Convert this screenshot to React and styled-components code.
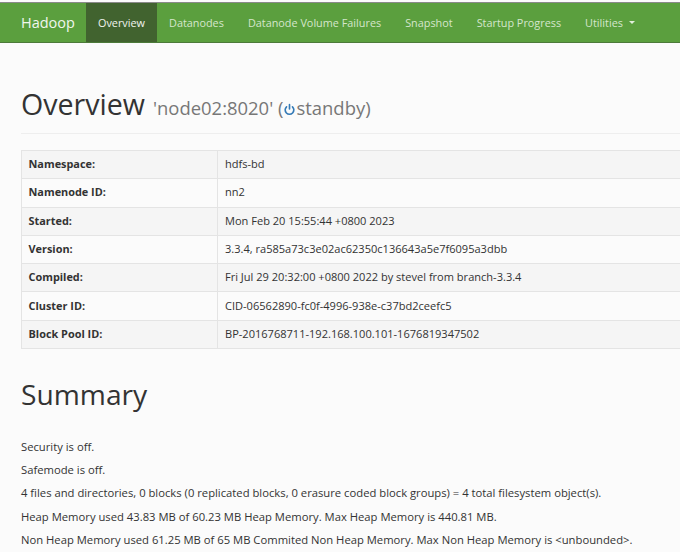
import React from "react";
import styled, { createGlobalStyle } from "styled-components";

const GlobalStyle = createGlobalStyle`
  html, body {
    margin: 0;
    padding: 0;
    height: 552px;
    overflow: hidden;
    background: #fbfbfb;
    font-family: "Open Sans", "Noto Sans", sans-serif;
    font-size: 12px;
    color: #333;
  }
`;

const Navbar = styled.nav`
  display: flex;
  align-items: stretch;
  height: 39px;
  margin-top: 2px;
  padding-left: 21px;
  background: #5b9f3e;
  border-top: 1px solid #8a8a8a;
  border-bottom: 1px solid #4c7a3a;
`;

const Brand = styled.a`
  display: flex;
  align-items: center;
  width: 65px;
  font-size: 14.5px;
  color: #f1f6ee;
`;

const NavItem = styled.a`
  display: flex;
  align-items: center;
  padding: 0 12px;
  font-size: 10.85px;
  color: ${(p) => (p.$active ? "#f0f4ee" : "#d5e6cc")};
  background: ${(p) => (p.$active ? "#41632f" : "transparent")};
`;

const Caret = styled.span`
  display: inline-block;
  width: 0;
  height: 0;
  margin-left: 6px;
  border-top: 3.5px solid #e3eedd;
  border-left: 3.5px solid transparent;
  border-right: 3.5px solid transparent;
`;

const Main = styled.main`
  padding: 0 0 0 21px;
  overflow: hidden;
`;

const PageHeader = styled.header`
  margin-top: 41px;
  padding-bottom: 5px;
  border-bottom: 1px solid #eee;
`;

const Title = styled.h1`
  margin: 0;
  font-size: 28.6px;
  font-weight: 400;
  line-height: 40px;
  color: #333;
`;

const Sub = styled.small`
  margin-left: 8px;
  font-size: 18.45px;
  color: #777;
`;

const PowerIcon = styled.svg`
  width: 13px;
  height: 13px;
  vertical-align: -1px;
  color: #337ab7;
`;

const InfoTable = styled.table`
  width: 720px;
  margin-top: 16px;
  border-collapse: collapse;
`;

const Row = styled.tr`
  height: 28.3px;
  background: ${(p) => (p.$odd ? "#f5f5f5" : "transparent")};
`;

const LabelCell = styled.th`
  width: 188px;
  padding: 0 0 2px 6.5px;
  text-align: left;
  font-size: 10.9px;
  font-weight: 700;
  border: 1px solid #e4e4e4;
`;

const ValueCell = styled.td`
  padding: 0 0 2px 7.5px;
  font-size: 11.05px;
  border: 1px solid #e4e4e4;
`;

const SectionTitle = styled.h2`
  margin: 25px 0 0;
  font-size: 28.2px;
  font-weight: 400;
  line-height: 40px;
  color: #333;
`;

const SummaryList = styled.div`
  margin-top: 21px;
  font-size: 11.25px;
`;

const SummaryLine = styled.p`
  margin: 0;
  line-height: 23.2px;
  white-space: nowrap;
`;

const navItems = [
  "Datanodes",
  "Datanode Volume Failures",
  "Snapshot",
  "Startup Progress",
];

const rows = [
  ["Namespace:", "hdfs-bd"],
  ["Namenode ID:", "nn2"],
  ["Started:", "Mon Feb 20 15:55:44 +0800 2023"],
  ["Version:", "3.3.4, ra585a73c3e02ac62350c136643a5e7f6095a3dbb"],
  ["Compiled:", "Fri Jul 29 20:32:00 +0800 2022 by stevel from branch-3.3.4"],
  ["Cluster ID:", "CID-06562890-fc0f-4996-938e-c37bd2ceefc5"],
  ["Block Pool ID:", "BP-2016768711-192.168.100.101-1676819347502"],
];

const summary = [
  "Security is off.",
  "Safemode is off.",
  "4 files and directories, 0 blocks (0 replicated blocks, 0 erasure coded block groups) = 4 total filesystem object(s).",
  "Heap Memory used 43.83 MB of 60.23 MB Heap Memory. Max Heap Memory is 440.81 MB.",
  "Non Heap Memory used 61.25 MB of 65 MB Commited Non Heap Memory. Max Non Heap Memory is <unbounded>.",
];

const App = () => {
  return (
    <>
      <GlobalStyle />
      <Navbar>
        <Brand>Hadoop</Brand>
        <NavItem $active>Overview</NavItem>
        {navItems.map((item) => (
          <NavItem key={item}>{item}</NavItem>
        ))}
        <NavItem>
          Utilities <Caret />
        </NavItem>
      </Navbar>
      <Main>
        <PageHeader>
          <Title>
            Overview
            <Sub>
              'node02:8020' (
              <PowerIcon viewBox="0 0 24 24" fill="none" stroke="currentColor" strokeWidth="3" strokeLinecap="round">
                <path d="M12 3v8" />
                <path d="M6.5 7a8 8 0 1 0 11 0" />
              </PowerIcon>
              standby)
            </Sub>
          </Title>
        </PageHeader>
        <InfoTable>
          <tbody>
            {rows.map(([label, value], index) => (
              <Row key={label} $odd={index % 2 === 0}>
                <LabelCell>{label}</LabelCell>
                <ValueCell>{value}</ValueCell>
              </Row>
            ))}
          </tbody>
        </InfoTable>
        <SectionTitle>Summary</SectionTitle>
        <SummaryList>
          {summary.map((line) => (
            <SummaryLine key={line}>{line}</SummaryLine>
          ))}
        </SummaryList>
      </Main>
    </>
  );
};

export default App;
